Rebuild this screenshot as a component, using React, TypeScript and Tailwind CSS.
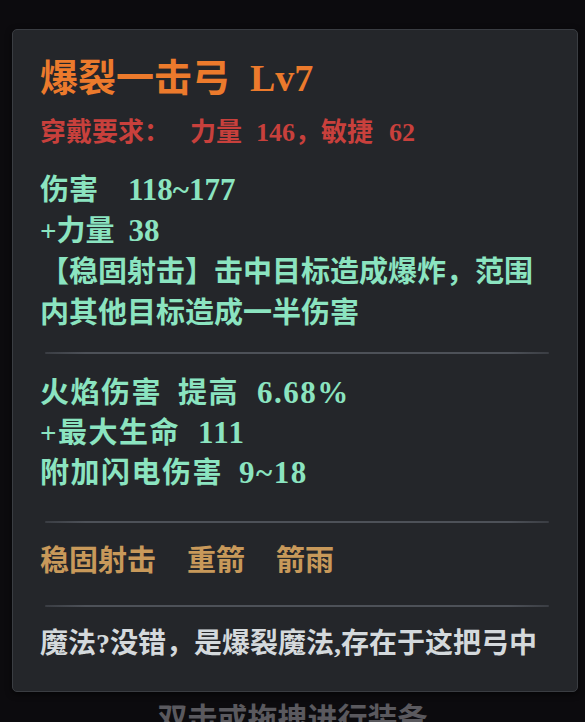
const serif = "font-['Liberation_Serif','Noto_Sans_CJK_SC',serif]";

function Divider({ className = "" }: { className?: string }) {
  return (
    <div
      className={`ml-[5px] h-[2px] rounded-full bg-[linear-gradient(90deg,#3a3d43,#4d5158_8%,#4d5158_92%,#3a3d43)] ${className}`}
    />
  );
}

// numbers in the stat lines run a little larger than the CJK text
function Num({ children, className = "" }: { children: React.ReactNode; className?: string }) {
  return <span className={`text-[31px] leading-none ${className}`}>{children}</span>;
}

function ItemTooltip() {
  return (
    <div className="ml-[12px] w-[566px] rounded-[5px] border border-[#3a3d42] bg-[#24262a] pl-[27px] pr-[28px] pt-[25px] pb-[27px] shadow-[0_2px_6px_rgba(0,0,0,0.6)]">
      <h1 className="text-[38px] leading-[46px] font-bold text-[#ec7a2c]">
        爆裂一击弓<span className="ml-[20px]">Lv7</span>
      </h1>

      <p className="mt-[14px] text-[26px] leading-[36px] font-bold text-[#c8403c]">
        穿戴要求：<span className="ml-[20px]">力量</span>
        <span className="ml-[14px]">146</span>，敏捷
        <span className="ml-[16px]">62</span>
      </p>

      <div className="mt-[19px] text-[29px] leading-[41px] font-bold text-[#8be4c0]">
        <p>
          伤害<Num className="ml-[30px]">118~177</Num>
        </p>
        <p>
          +力量<Num className="ml-[14px]">38</Num>
        </p>
        <p className="whitespace-nowrap">【稳固射击】击中目标造成爆炸，范围</p>
        <p>内其他目标造成一半伤害</p>
      </div>

      <Divider className="mt-[18px]" />

      <div className="mt-[19px] text-[29px] leading-[40px] font-bold tracking-[1.5px] text-[#8be4c0]">
        <p>
          火焰伤害<span className="ml-[16px]">提高</span>
          <Num className="ml-[18px]">6.68%</Num>
        </p>
        <p>
          +最大生命<Num className="ml-[18px]">111</Num>
        </p>
        <p>
          附加闪电伤害<Num className="ml-[16px]">9~18</Num>
        </p>
      </div>

      <Divider className="mt-[28px]" />

      <p className="mt-[18px] flex gap-[31px] text-[29px] leading-[40px] font-bold text-[#c8995a]">
        <span>稳固射击</span>
        <span>重箭</span>
        <span>箭雨</span>
      </p>

      <Divider className="mt-[24px]" />

      <p className="mt-[17px] whitespace-nowrap text-[28px] leading-[40px] font-bold text-[#d4d9dc]">
        魔法?没错，是爆裂魔法,存在于这把弓中
      </p>
    </div>
  );
}

export default function App() {
  return (
    <div className={`h-[722px] overflow-hidden bg-[#0c0b0e] pt-[29px] ${serif}`}>
      <ItemTooltip />
      <p className="mt-[9px] text-center text-[30px] leading-[36px] font-bold text-[#5a595e]">
        双击或拖拽进行装备
      </p>
    </div>
  );
}
